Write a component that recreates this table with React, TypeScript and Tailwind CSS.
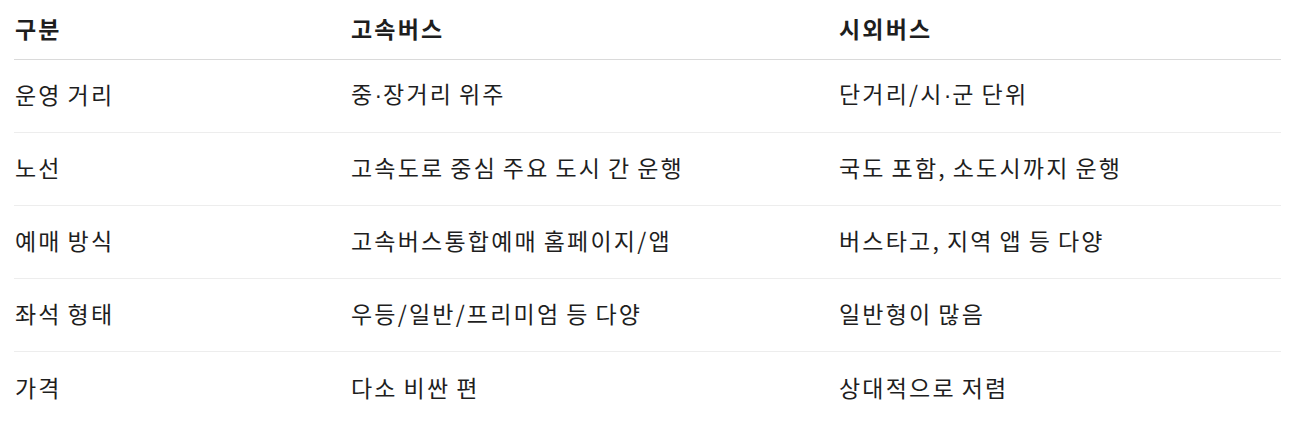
const rows = [
  ['운영 거리', '중·장거리 위주', '단거리/시·군 단위'],
  ['노선', '고속도로 중심 주요 도시 간 운행', '국도 포함, 소도시까지 운행'],
  ['예매 방식', '고속버스통합예매 홈페이지/앱', '버스타고, 지역 앱 등 다양'],
  ['좌석 형태', '우등/일반/프리미엄 등 다양', '일반형이 많음'],
  ['가격', '다소 비싼 편', '상대적으로 저렴'],
]

// 가운뎃점은 좁은 글꼴로 찍어야 원본 폭과 맞음
function Cell({ text }: { text: string }) {
  const parts = text.split('·')
  return (
    <>
      {parts.map((p, k) => (
        <span key={k}>
          {k > 0 && <span className="font-['Liberation_Sans',sans-serif] tracking-[1px]">·</span>}
          {p}
        </span>
      ))}
    </>
  )
}

export default function App() {
  return (
    <div className="min-h-[439px] bg-white pl-[14px] pr-[17px] font-['Noto_Sans_CJK_KR',sans-serif] text-[23px] tracking-[2.2px] [word-spacing:-1.5px] text-[#1e1e1e]">
      <table className="w-full border-collapse table-fixed">
        <colgroup>
          <col className="w-[336px]" />
          <col className="w-[488px]" />
          <col />
        </colgroup>
        <thead>
          <tr className="h-[59px] border-b border-[#dadada]">
            <th className="pl-[1px] pb-[2px] text-left font-bold">구분</th>
            <th className="pl-[1px] pb-[2px] text-left font-bold">고속버스</th>
            <th className="pl-[1px] pb-[2px] text-left font-bold">시외버스</th>
          </tr>
        </thead>
        <tbody>
          {rows.map((r, i) => (
            <tr key={i} className={i < rows.length - 1 ? 'h-[73px] border-b border-[#ededed]' : 'h-[73px]'}>
              {r.map((c, j) => (
                <td key={j} className="pl-[1px] pb-[2px] align-middle">
                  <Cell text={c} />
                </td>
              ))}
            </tr>
          ))}
        </tbody>
      </table>
    </div>
  )
}
